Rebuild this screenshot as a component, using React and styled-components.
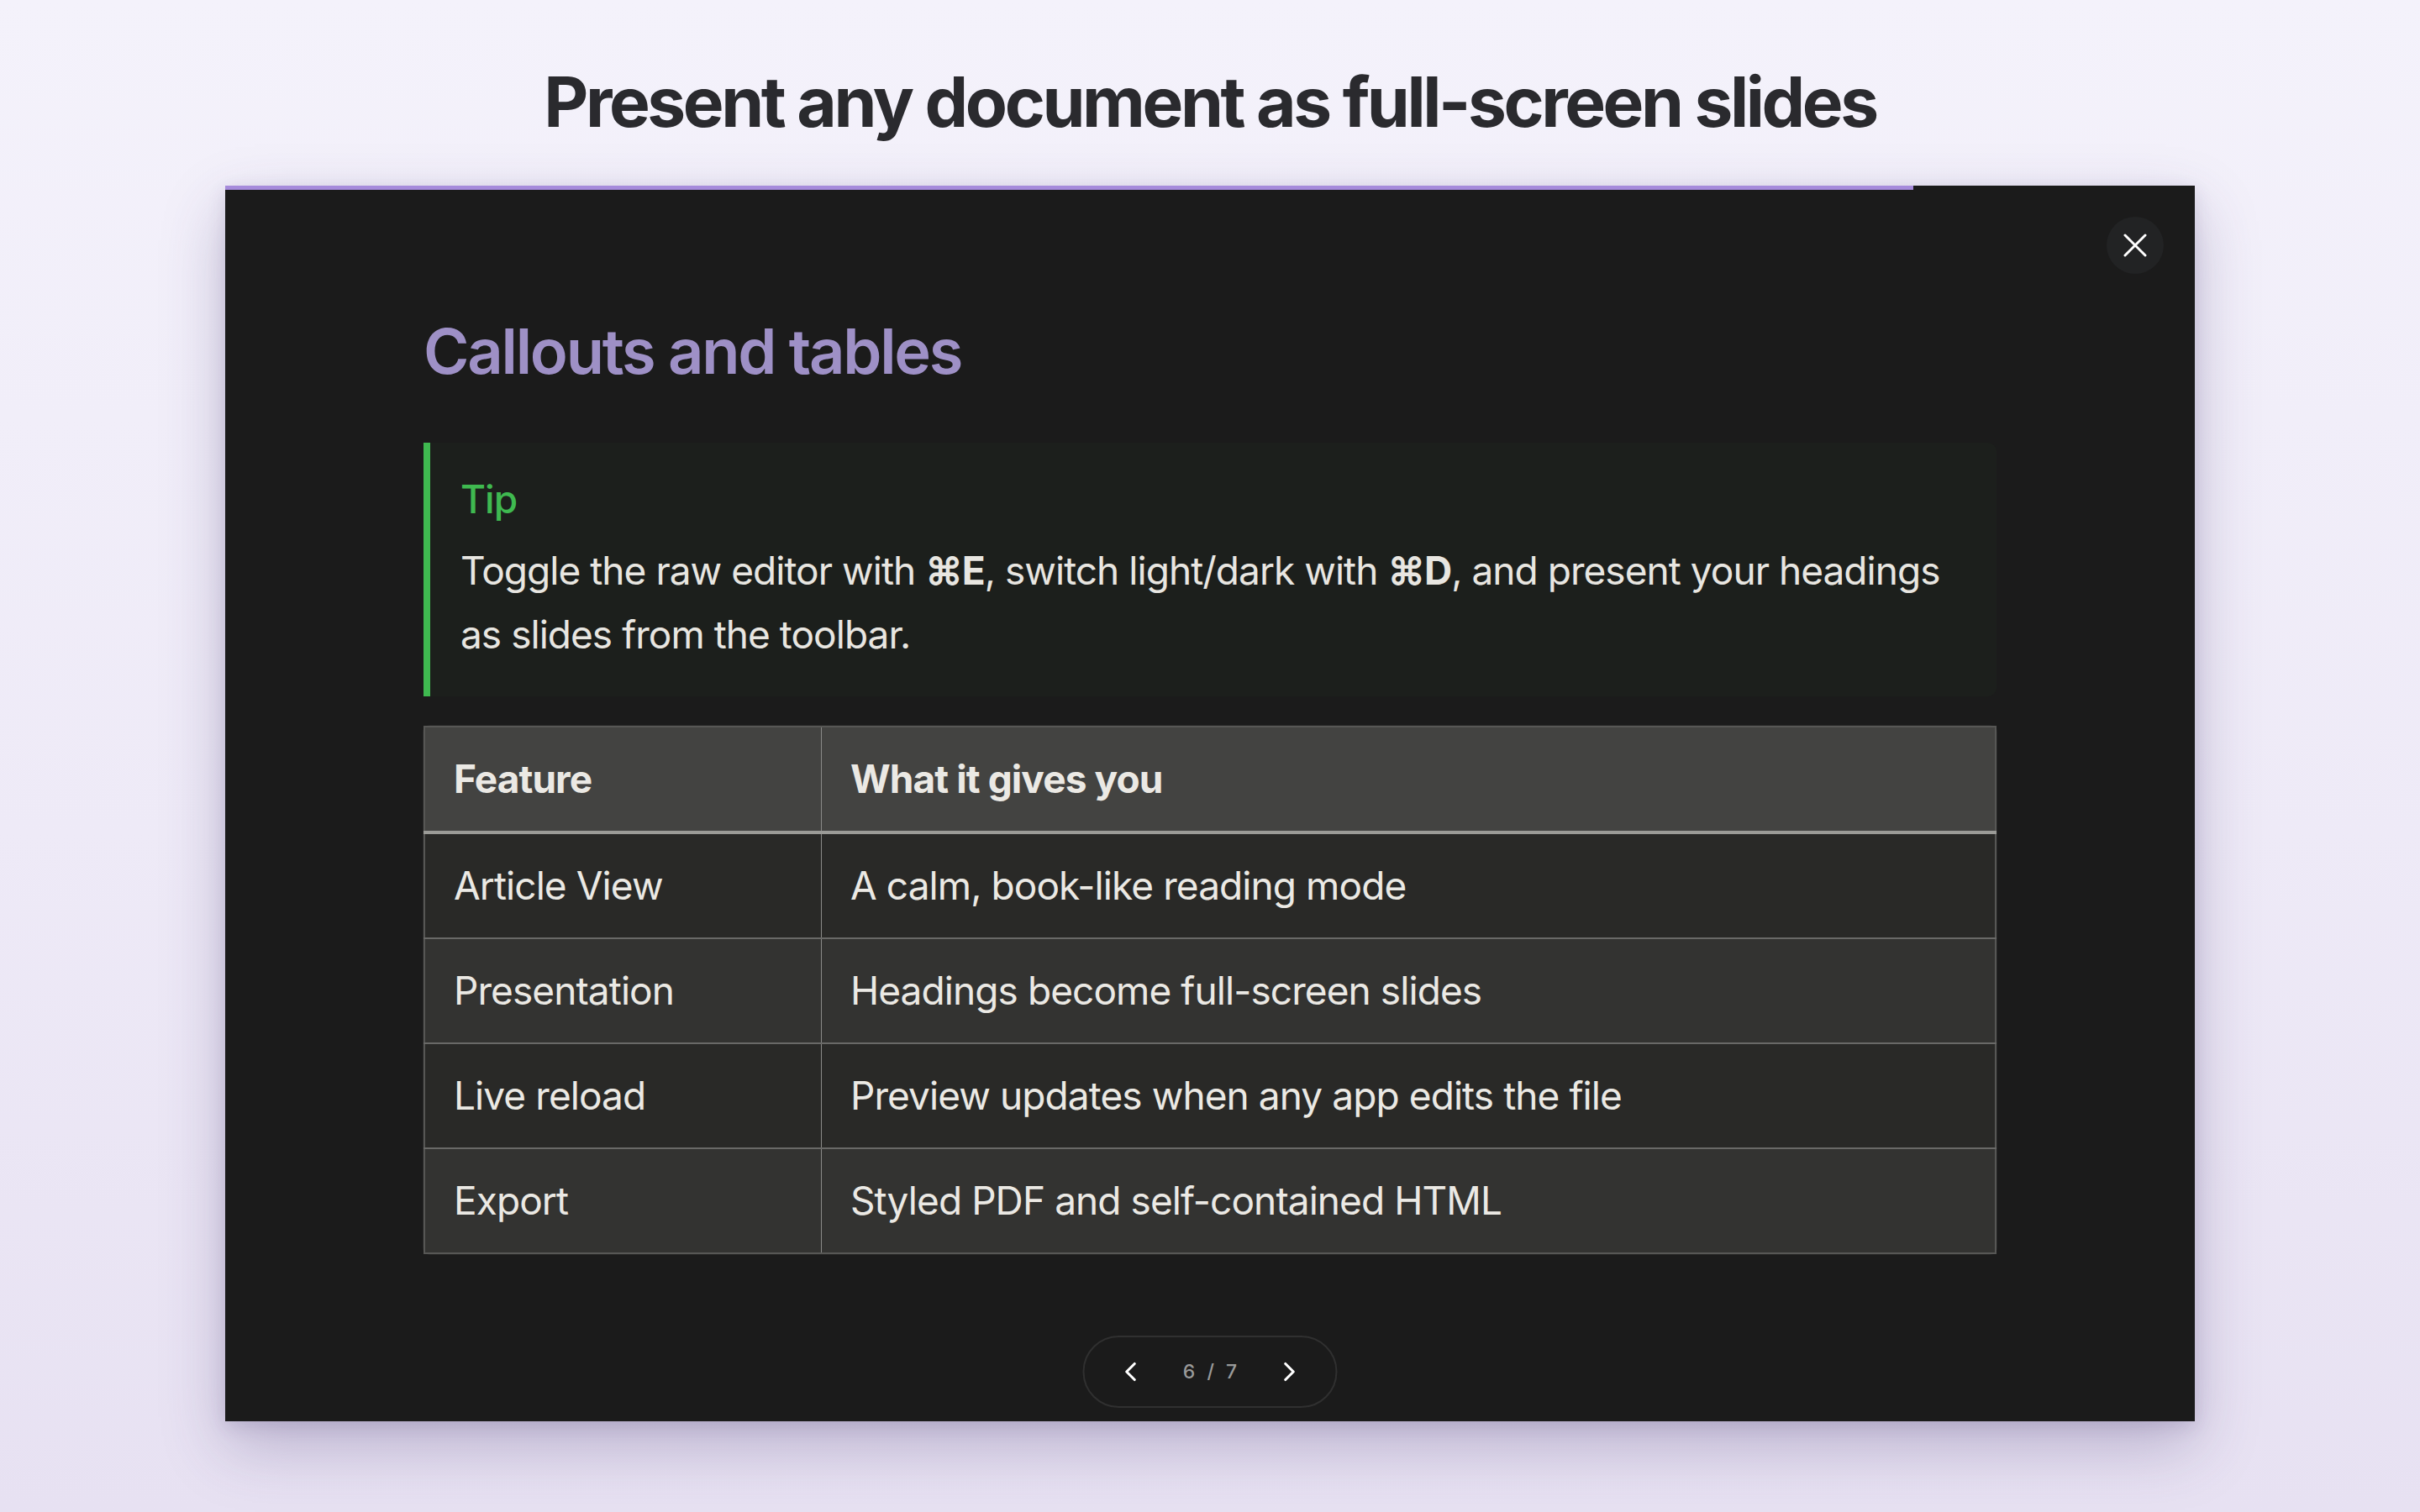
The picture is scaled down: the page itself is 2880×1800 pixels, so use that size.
import React from 'react'
import styled, { createGlobalStyle } from 'styled-components'
import { X, ChevronLeft, ChevronRight } from 'lucide-react'

const GlobalStyle = createGlobalStyle`
  html, body {
    margin: 0;
    padding: 0;
  }
  body {
    font-family: Inter, "Noto Sans", "Liberation Sans", sans-serif;
    background: linear-gradient(180deg, #f4f2fb 0%, #eeeaf7 55%, #e7e1f2 100%);
    min-height: 100vh;
  }
`

const Page = styled.div`
  min-height: 1800px;
  display: flex;
  flex-direction: column;
  align-items: center;
  box-sizing: border-box;
  padding-top: 73px;
`

const Title = styled.h1`
  margin: 0 0 50px;
  font-size: 82px;
  line-height: 1.2;
  font-weight: 700;
  letter-spacing: -0.042em;
  color: #2a2a2e;
`

const Slide = styled.section`
  position: relative;
  width: 2344px;
  height: 1471px;
  background: #1b1b1b;
  box-shadow: 0 30px 70px rgba(70, 55, 110, 0.28), 0 6px 20px rgba(70, 55, 110, 0.14);
  display: flex;
  flex-direction: column;
`

const Progress = styled.div`
  height: 5px;
  background: #a68bdb;
  flex-shrink: 0;
`

const Content = styled.div`
  padding: 148px 236px 0;
  display: flex;
  flex-direction: column;
`

const Heading = styled.h2`
  margin: 0 0 64px;
  font-size: 74px;
  line-height: 1.2;
  font-weight: 600;
  letter-spacing: -0.03em;
  color: #9e90c6;
`

const Callout = styled.div`
  background: #1c1f1c;
  border-left: 8px solid #3fb950;
  border-radius: 0 10px 10px 0;
  padding: 29px 40px 36px 36px;
  margin-bottom: 35px;
`

const CalloutTitle = styled.div`
  font-size: 46px;
  line-height: 76px;
  font-weight: 500;
  letter-spacing: -0.02em;
  color: #3fb950;
  margin-bottom: 9px;
`

const CalloutText = styled.p`
  margin: 0;
  font-size: 46px;
  line-height: 76px;
  letter-spacing: -0.021em;
  color: #e8e6e1;

  b {
    font-weight: 700;
  }
`

const TableWrap = styled.div`
  border-radius: 8px;
  box-shadow: 0 0 0 1px rgba(255, 255, 255, 0.05);
`

const Table = styled.table`
  width: 100%;
  border-collapse: collapse;
  border: 2px solid #575755;
  font-size: 46px;
  letter-spacing: -0.02em;
  color: #ebe9e4;
`

const HeadCell = styled.th`
  text-align: left;
  font-weight: 700;
  background: #434341;
  line-height: 73px;
  padding: 25px 34px;
  border-bottom: 4px solid #9b9b97;
  border-right: ${(p) => (p.$first ? '1px solid #8a8a88' : 'none')};
  width: ${(p) => (p.$first ? '403px' : 'auto')};
`

const Row = styled.tr`
  background: ${(p) => (p.$even ? '#333331' : '#292927')};
`

const Cell = styled.td`
  line-height: 73px;
  padding: 25px 34px;
  border-top: 2px solid #696967;
  border-right: ${(p) => (p.$first ? '1px solid #8a8a88' : 'none')};
`

const CloseButton = styled.button`
  position: absolute;
  top: 37px;
  right: 37px;
  width: 68px;
  height: 68px;
  border-radius: 50%;
  border: none;
  background: #222324;
  color: #ffffff;
  display: flex;
  align-items: center;
  justify-content: center;
  padding: 0;
`

const Pager = styled.div`
  position: absolute;
  left: 50%;
  bottom: 16px;
  transform: translateX(-50%);
  width: 303px;
  height: 86px;
  box-sizing: border-box;
  border-radius: 43px;
  border: 2px solid #303030;
  background: #1b1b1b;
  display: flex;
  align-items: center;
  justify-content: space-between;
  padding: 0 31px;
`

const PagerButton = styled.button`
  width: 48px;
  height: 48px;
  border: none;
  background: transparent;
  color: #ffffff;
  padding: 0;
  display: flex;
  align-items: center;
  justify-content: center;
`

const PagerCount = styled.span`
  font-size: 23px;
  font-weight: 500;
  letter-spacing: 4px;
  color: #9a9a9a;
  padding-left: 4px;
`

const rows = [
  ['Article View', 'A calm, book-like reading mode'],
  ['Presentation', 'Headings become full-screen slides'],
  ['Live reload', 'Preview updates when any app edits the file'],
  ['Export', 'Styled PDF and self-contained HTML'],
]

export default function App() {
  const current = 6
  const total = 7
  return (
    <Page>
      <GlobalStyle />
      <Title>Present any document as full-screen slides</Title>
      <Slide>
        <Progress style={{ width: `${(current / total) * 100}%` }} />
        <CloseButton aria-label="Close">
          <X size={48} strokeWidth={1.5} />
        </CloseButton>
        <Content>
          <Heading>Callouts and tables</Heading>
          <Callout>
            <CalloutTitle>Tip</CalloutTitle>
            <CalloutText>
              Toggle the raw editor with <b>⌘E</b>, switch light/dark with <b>⌘D</b>, and present your headings as slides from the toolbar.
            </CalloutText>
          </Callout>
          <TableWrap>
            <Table>
              <thead>
                <tr>
                  <HeadCell $first>Feature</HeadCell>
                  <HeadCell>What it gives you</HeadCell>
                </tr>
              </thead>
              <tbody>
                {rows.map(([feature, desc], i) => (
                  <Row key={feature} $even={i % 2 === 1}>
                    <Cell $first>{feature}</Cell>
                    <Cell>{desc}</Cell>
                  </Row>
                ))}
              </tbody>
            </Table>
          </TableWrap>
        </Content>
        <Pager>
          <PagerButton aria-label="Previous">
            <ChevronLeft size={38} strokeWidth={2} />
          </PagerButton>
          <PagerCount>{current} / {total}</PagerCount>
          <PagerButton aria-label="Next">
            <ChevronRight size={38} strokeWidth={2} />
          </PagerButton>
        </Pager>
      </Slide>
    </Page>
  )
}
